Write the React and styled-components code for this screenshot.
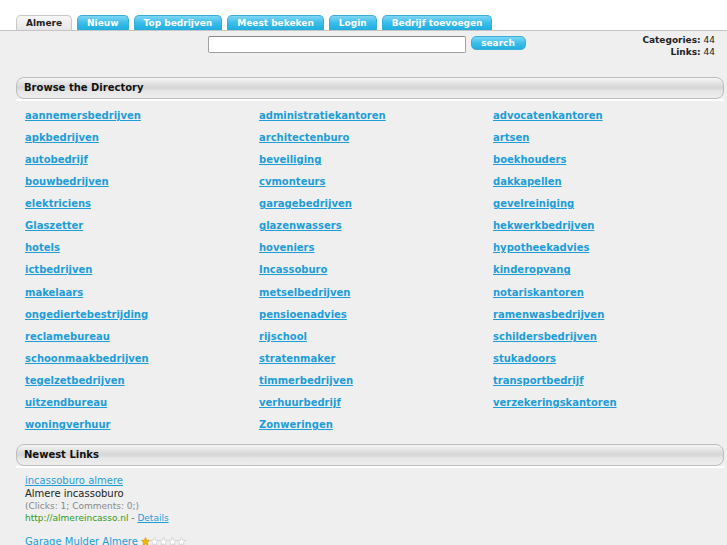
import React from "react";
import styled, { createGlobalStyle } from "styled-components";

const Global = createGlobalStyle`
  html, body { margin: 0; padding: 0; background: #efefef; }
  body { font-family: "DejaVu Sans", Verdana, sans-serif; }
`;

const Top = styled.div`
  background: #fff;
  height: 31px;
  box-sizing: border-box;
  padding: 15px 0 0 16px;
  border-bottom: 1px solid #c4c4c4;
  display: flex;
  align-items: flex-end;
  gap: 5px;
`;

const Tab = styled.a`
  display: block;
  height: 15px;
  box-sizing: border-box;
  padding: 0 ${(p) => p.$pad || 9}px;
  font: bold 9px/14px "DejaVu Sans", sans-serif;
  color: ${(p) => (p.$active ? "#222" : "#fff")};
  border-radius: 5px 5px 0 0;
  border: 1px solid ${(p) => (p.$active ? "#c8c8c8" : "#3aaed8")};
  border-bottom: none;
  background: ${(p) =>
    p.$active
      ? "linear-gradient(#f7f7f7, #e6e6e6)"
      : "linear-gradient(#7fd6f4, #39bdea 50%, #1fadde)"};
  text-align: center;
`;

const SearchRow = styled.div`
  display: grid;
  grid-template-columns: 1fr auto 1fr;
  align-items: start;
  padding: 5px 12px 0 18px;
  height: 40px;
  box-sizing: border-box;
`;

const SearchForm = styled.div`
  grid-column: 2;
  display: flex;
  gap: 5px;
  align-items: flex-start;
`;

const Input = styled.input`
  width: 258px;
  height: 17px;
  box-sizing: border-box;
  border: 1px solid #a0a0a0;
  border-top-color: #888;
  border-radius: 2px;
  background: #fff;
  margin: 0;
`;

const SearchBtn = styled.button`
  width: 55px;
  height: 14px;
  margin: 0;
  padding: 0;
  border: 1px solid #3aaed8;
  border-radius: 5px;
  background: linear-gradient(#80d7f5, #3bbeea 50%, #22afdf);
  color: #fff;
  font: bold 9px/12px "DejaVu Sans", sans-serif;
`;

const Stats = styled.div`
  grid-column: 3;
  justify-self: end;
  margin-top: -2px;
  text-align: right;
  font: 9px/12px "DejaVu Sans", sans-serif;
  color: #222;
  b { font-weight: bold; }
`;

const Content = styled.div`
  padding: 6px 3px 0 16px;
`;

const BarWrap = styled.div`
  border-bottom: 2px solid #fff;
  margin-bottom: ${(p) => p.$mb}px;
`;

const Bar = styled.div`
  height: 22px;
  box-sizing: border-box;
  border: 1px solid #bdbdbd;
  border-radius: 8px;
  background: linear-gradient(#f6f6f6 0%, #e0e0e0 30%, #d5d5d5 50%, #e6e6e6 65%, #eeeeee 100%);
  padding-left: 7px;
  font: bold 10px/20px "DejaVu Sans", sans-serif;
  color: #111;
`;

const Grid = styled.div`
  display: grid;
  grid-template-columns: 234px 234px 234px;
  padding-left: 9px;
  margin-bottom: 9px;
`;

const Cell = styled.div`
  height: 22.07px;
`;

const Cat = styled.a`
  font: bold 10px/22.07px "DejaVu Sans", sans-serif;
  color: #1d9dd8;
  text-decoration: underline;
  white-space: nowrap;
`;

const Links = styled.div`
  padding-left: 9px;
`;

const LinkItem = styled.div`
  margin-bottom: 10px;
`;

const Title = styled.a`
  display: block;
  font: 10px/13px "DejaVu Sans", sans-serif;
  color: #1d9dd8;
  text-decoration: ${(p) => (p.$plain ? "none" : "underline")};
  svg { vertical-align: -1px; }
`;

const TitleText = styled.span`
  text-decoration: underline;
`;

const Desc = styled.div`
  font: 10px/13px "DejaVu Sans", sans-serif;
  color: #222;
`;

const Meta = styled.div`
  font: 9px/12.5px "DejaVu Sans", sans-serif;
  color: #888;
`;

const Url = styled.div`
  font: 9px/13px "DejaVu Sans", sans-serif;
  color: #2f9a1a;
  span { color: #555; }
  a { color: #1d9dd8; text-decoration: underline; }
`;

const Star = ({ filled }) => (
  <svg width="9" height="9" viewBox="0 0 10 10">
    <polygon
      points="5,0.5 6.3,3.6 9.6,3.8 7.1,6 7.9,9.4 5,7.6 2.1,9.4 2.9,6 0.4,3.8 3.7,3.6"
      fill={filled ? "#f5b800" : "#fff"}
      stroke={filled ? "#d89a00" : "#c8c8c8"}
      strokeWidth="0.8"
    />
  </svg>
);

const cats = [
  ["aannemersbedrijven", "administratiekantoren", "advocatenkantoren"],
  ["apkbedrijven", "architectenburo", "artsen"],
  ["autobedrijf", "beveiliging", "boekhouders"],
  ["bouwbedrijven", "cvmonteurs", "dakkapellen"],
  ["elektriciens", "garagebedrijven", "gevelreiniging"],
  ["Glaszetter", "glazenwassers", "hekwerkbedrijven"],
  ["hotels", "hoveniers", "hypotheekadvies"],
  ["ictbedrijven", "Incassoburo", "kinderopvang"],
  ["makelaars", "metselbedrijven", "notariskantoren"],
  ["ongediertebestrijding", "pensioenadvies", "ramenwasbedrijven"],
  ["reclamebureau", "rijschool", "schildersbedrijven"],
  ["schoonmaakbedrijven", "stratenmaker", "stukadoors"],
  ["tegelzetbedrijven", "timmerbedrijven", "transportbedrijf"],
  ["uitzendbureau", "verhuurbedrijf", "verzekeringskantoren"],
  ["woningverhuur", "Zonweringen", ""],
];

const tabs = [
  ["Almere", true],
  ["Nieuw", false],
  ["Top bedrijven", false],
  ["Meest bekeken", false],
  ["Login", false],
  ["Bedrijf toevoegen", false],
];

export default function App() {
  return (
    <>
      <Global />
      <Top>
        {tabs.map(([t, a]) => (
          <Tab key={t} $active={a}>
            {t}
          </Tab>
        ))}
      </Top>
      <SearchRow>
        <SearchForm>
          <Input type="text" />
          <SearchBtn>search</SearchBtn>
        </SearchForm>
        <Stats>
          <b>Categories:</b> 44
          <br />
          <b>Links:</b> 44
        </Stats>
      </SearchRow>
      <Content>
        <BarWrap $mb={3}>
          <Bar>Browse the Directory</Bar>
        </BarWrap>
        <Grid>
          {cats.flat().map((c, i) => (
            <Cell key={i}>{c && <Cat href="#">{c}</Cat>}</Cell>
          ))}
        </Grid>
        <BarWrap $mb={6}>
          <Bar>Newest Links</Bar>
        </BarWrap>
        <Links>
          <LinkItem>
            <Title href="#">incassoburo almere</Title>
            <Desc>Almere incassoburo</Desc>
            <Meta>(Clicks: 1; Comments: 0;)</Meta>
            <Url>
              http://almereincasso.nl <span>-</span> <a href="#">Details</a>
            </Url>
          </LinkItem>
          <LinkItem>
            <Title href="#" $plain>
              <TitleText>Garage Mulder Almere</TitleText>{" "}
              <Star filled />
              <Star />
              <Star />
              <Star />
              <Star />
            </Title>
          </LinkItem>
        </Links>
      </Content>
    </>
  );
}
